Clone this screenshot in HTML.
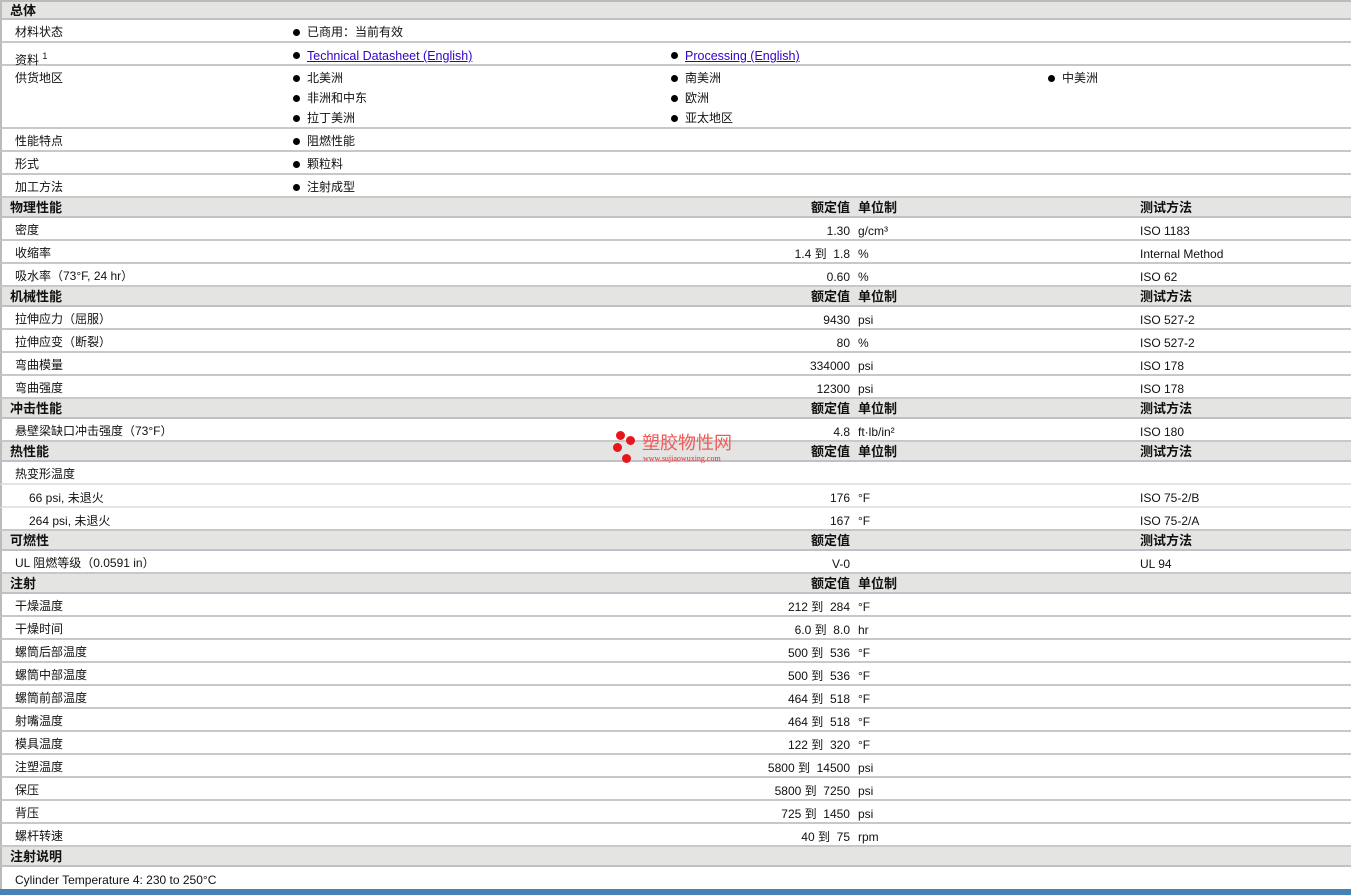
<!DOCTYPE html>
<html><head><meta charset="utf-8"><style>
*{margin:0;padding:0;box-sizing:border-box}
body{width:1351px;height:895px;background:#fff;position:relative;overflow:hidden;font-family:"Liberation Sans","Noto Sans CJK SC",sans-serif;font-size:12px;color:#111}
.r{position:absolute;left:0;width:1351px;border-bottom:2px solid #c8c8c8;border-left:2px solid #bbb}
.h{background:#e4e4e2;font-weight:bold;font-size:13px;border-bottom:2px solid #c0c0c8}
.t{position:absolute;white-space:nowrap;line-height:14px;margin-top:1px}
.v{position:absolute;right:501px;text-align:right;white-space:nowrap;line-height:14px;margin-top:1px}
.u{position:absolute;left:856px;white-space:nowrap;line-height:14px;margin-top:1px}
.m{position:absolute;left:1138px;white-space:nowrap;line-height:14px;margin-top:1px}
.b{position:absolute;width:7px;height:7px;border-radius:50%;background:#000;margin-top:1px}
a{color:#3300cc;text-decoration:underline;font-size:12.5px}
</style></head><body>
<div class="r h" style="top:0;height:20px;border-top:2px solid #bbb"><span class="t" style="left:8px;top:1px">总体</span></div>
<div class="r" style="top:20px;height:23px"><span class="t" style="left:13px;top:4px">材料状态</span><span class="b" style="left:291px;top:8px"></span><span class="t" style="left:305px;top:4px">已商用：当前有效</span></div>
<div class="r" style="top:43px;height:23px"><span class="t" style="left:13px;top:5px">资料 <sup style="font-size:9px">1</sup></span><span class="b" style="left:291px;top:8px"></span><span class="t" style="left:305px;top:5px"><a>Technical Datasheet (English)</a></span><span class="b" style="left:669px;top:8px"></span><span class="t" style="left:683px;top:5px"><a>Processing (English)</a></span></div>
<div class="r" style="top:66px;height:63px"><span class="t" style="left:13px;top:4px">供货地区</span>
<span class="b" style="left:291px;top:8px"></span><span class="t" style="left:305px;top:4px">北美洲</span>
<span class="b" style="left:669px;top:8px"></span><span class="t" style="left:683px;top:4px">南美洲</span>
<span class="b" style="left:1046px;top:8px"></span><span class="t" style="left:1060px;top:4px">中美洲</span>
<span class="b" style="left:291px;top:28px"></span><span class="t" style="left:305px;top:24px">非洲和中东</span>
<span class="b" style="left:669px;top:28px"></span><span class="t" style="left:683px;top:24px">欧洲</span>
<span class="b" style="left:291px;top:48px"></span><span class="t" style="left:305px;top:44px">拉丁美洲</span>
<span class="b" style="left:669px;top:48px"></span><span class="t" style="left:683px;top:44px">亚太地区</span></div>
<div class="r" style="top:129px;height:23px"><span class="t" style="left:13px;top:4px">性能特点</span><span class="b" style="left:291px;top:8px"></span><span class="t" style="left:305px;top:4px">阻燃性能</span></div>
<div class="r" style="top:152px;height:23px"><span class="t" style="left:13px;top:4px">形式</span><span class="b" style="left:291px;top:8px"></span><span class="t" style="left:305px;top:4px">颗粒料</span></div>
<div class="r" style="top:175px;height:23px"><span class="t" style="left:13px;top:4px">加工方法</span><span class="b" style="left:291px;top:8px"></span><span class="t" style="left:305px;top:4px">注射成型</span></div>

<div class="r h" style="top:198px;height:20px"><span class="t" style="left:8px;top:2px">物理性能</span><span class="v" style="top:2px">额定值</span><span class="u" style="top:2px">单位制</span><span class="m" style="top:2px">测试方法</span></div>
<div class="r" style="top:218px;height:23px"><span class="t" style="left:13px;top:4px">密度</span><span class="v" style="top:5px">1.30</span><span class="u" style="top:5px">g/cm³</span><span class="m" style="top:5px">ISO 1183</span></div>
<div class="r" style="top:241px;height:23px"><span class="t" style="left:13px;top:4px">收缩率</span><span class="v" style="top:5px">1.4 到 &nbsp;1.8</span><span class="u" style="top:5px">%</span><span class="m" style="top:5px">Internal Method</span></div>
<div class="r" style="top:264px;height:23px"><span class="t" style="left:13px;top:4px">吸水率（73°F, 24 hr）</span><span class="v" style="top:5px">0.60</span><span class="u" style="top:5px">%</span><span class="m" style="top:5px">ISO 62</span></div>

<div class="r h" style="top:287px;height:20px"><span class="t" style="left:8px;top:2px">机械性能</span><span class="v" style="top:2px">额定值</span><span class="u" style="top:2px">单位制</span><span class="m" style="top:2px">测试方法</span></div>
<div class="r" style="top:307px;height:23px"><span class="t" style="left:13px;top:4px">拉伸应力（屈服）</span><span class="v" style="top:5px">9430</span><span class="u" style="top:5px">psi</span><span class="m" style="top:5px">ISO 527-2</span></div>
<div class="r" style="top:330px;height:23px"><span class="t" style="left:13px;top:4px">拉伸应变（断裂）</span><span class="v" style="top:5px">80</span><span class="u" style="top:5px">%</span><span class="m" style="top:5px">ISO 527-2</span></div>
<div class="r" style="top:353px;height:23px"><span class="t" style="left:13px;top:4px">弯曲模量</span><span class="v" style="top:5px">334000</span><span class="u" style="top:5px">psi</span><span class="m" style="top:5px">ISO 178</span></div>
<div class="r" style="top:376px;height:23px"><span class="t" style="left:13px;top:4px">弯曲强度</span><span class="v" style="top:5px">12300</span><span class="u" style="top:5px">psi</span><span class="m" style="top:5px">ISO 178</span></div>

<div class="r h" style="top:399px;height:20px"><span class="t" style="left:8px;top:2px">冲击性能</span><span class="v" style="top:2px">额定值</span><span class="u" style="top:2px">单位制</span><span class="m" style="top:2px">测试方法</span></div>
<div class="r" style="top:419px;height:23px"><span class="t" style="left:13px;top:4px">悬壁梁缺口冲击强度（73°F）</span><span class="v" style="top:5px">4.8</span><span class="u" style="top:5px">ft·lb/in²</span><span class="m" style="top:5px">ISO 180</span></div>
<div class="r h" style="top:442px;height:20px"><span class="t" style="left:8px;top:2px">热性能</span><span class="v" style="top:2px">额定值</span><span class="u" style="top:2px">单位制</span><span class="m" style="top:2px">测试方法</span></div>
<div class="r" style="top:462px;height:23px;border-bottom-color:#e4e4e4"><span class="t" style="left:13px;top:4px">热变形温度</span></div>
<div class="r" style="top:485px;height:23px;border-bottom-color:#e4e4e4"><span class="t" style="left:27px;top:5px">66 psi, 未退火</span><span class="v" style="top:5px">176</span><span class="u" style="top:5px">°F</span><span class="m" style="top:5px">ISO 75-2/B</span></div>
<div class="r" style="top:508px;height:23px"><span class="t" style="left:27px;top:5px">264 psi, 未退火</span><span class="v" style="top:5px">167</span><span class="u" style="top:5px">°F</span><span class="m" style="top:5px">ISO 75-2/A</span></div>

<div class="r h" style="top:531px;height:20px"><span class="t" style="left:8px;top:2px">可燃性</span><span class="v" style="top:2px">额定值</span><span class="m" style="top:2px">测试方法</span></div>
<div class="r" style="top:551px;height:23px"><span class="t" style="left:13px;top:4px">UL 阻燃等级（0.0591 in）</span><span class="v" style="top:5px">V-0</span><span class="m" style="top:5px">UL 94</span></div>

<div class="r h" style="top:574px;height:20px"><span class="t" style="left:8px;top:2px">注射</span><span class="v" style="top:2px">额定值</span><span class="u" style="top:2px">单位制</span></div>
<div class="r" style="top:594px;height:23px"><span class="t" style="left:13px;top:4px">干燥温度</span><span class="v" style="top:5px">212 到 &nbsp;284</span><span class="u" style="top:5px">°F</span></div>
<div class="r" style="top:617px;height:23px"><span class="t" style="left:13px;top:4px">干燥时间</span><span class="v" style="top:5px">6.0 到 &nbsp;8.0</span><span class="u" style="top:5px">hr</span></div>
<div class="r" style="top:640px;height:23px"><span class="t" style="left:13px;top:4px">螺筒后部温度</span><span class="v" style="top:5px">500 到 &nbsp;536</span><span class="u" style="top:5px">°F</span></div>
<div class="r" style="top:663px;height:23px"><span class="t" style="left:13px;top:4px">螺筒中部温度</span><span class="v" style="top:5px">500 到 &nbsp;536</span><span class="u" style="top:5px">°F</span></div>
<div class="r" style="top:686px;height:23px"><span class="t" style="left:13px;top:4px">螺筒前部温度</span><span class="v" style="top:5px">464 到 &nbsp;518</span><span class="u" style="top:5px">°F</span></div>
<div class="r" style="top:709px;height:23px"><span class="t" style="left:13px;top:4px">射嘴温度</span><span class="v" style="top:5px">464 到 &nbsp;518</span><span class="u" style="top:5px">°F</span></div>
<div class="r" style="top:732px;height:23px"><span class="t" style="left:13px;top:4px">模具温度</span><span class="v" style="top:5px">122 到 &nbsp;320</span><span class="u" style="top:5px">°F</span></div>
<div class="r" style="top:755px;height:23px"><span class="t" style="left:13px;top:4px">注塑温度</span><span class="v" style="top:5px">5800 到 &nbsp;14500</span><span class="u" style="top:5px">psi</span></div>
<div class="r" style="top:778px;height:23px"><span class="t" style="left:13px;top:4px">保压</span><span class="v" style="top:5px">5800 到 &nbsp;7250</span><span class="u" style="top:5px">psi</span></div>
<div class="r" style="top:801px;height:23px"><span class="t" style="left:13px;top:4px">背压</span><span class="v" style="top:5px">725 到 &nbsp;1450</span><span class="u" style="top:5px">psi</span></div>
<div class="r" style="top:824px;height:23px"><span class="t" style="left:13px;top:4px">螺杆转速</span><span class="v" style="top:5px">40 到 &nbsp;75</span><span class="u" style="top:5px">rpm</span></div>
<div class="r h" style="top:847px;height:20px"><span class="t" style="left:8px;top:2px">注射说明</span></div>
<div class="r" style="top:867px;height:22px;border-bottom:none"><span class="t" style="left:13px;top:5px">Cylinder Temperature 4: 230 to 250°C</span></div>
<div style="position:absolute;top:889px;left:0;width:1351px;height:6px;background:#4682b4"></div>

<div style="position:absolute;left:613px;top:430px;width:130px;height:36px">
<span style="position:absolute;left:3px;top:1px;width:9px;height:9px;border-radius:50%;background:#e8161c"></span>
<span style="position:absolute;left:13px;top:6px;width:9px;height:9px;border-radius:50%;background:#e8161c"></span>
<span style="position:absolute;left:0;top:13px;width:9px;height:9px;border-radius:50%;background:#e8161c"></span>
<span style="position:absolute;left:9px;top:24px;width:9px;height:9px;border-radius:50%;background:#e8161c"></span>
<span style="position:absolute;left:29px;top:2px;font-size:18px;line-height:20px;color:#f05a5a;font-family:'Noto Sans CJK SC',sans-serif;white-space:nowrap">塑胶物性网</span>
<span style="position:absolute;left:30px;top:24px;font-size:8px;line-height:9px;color:#e03030;font-family:'Liberation Serif',serif;white-space:nowrap">www.sujiaowuxing.com</span>
</div>
</body></html>
